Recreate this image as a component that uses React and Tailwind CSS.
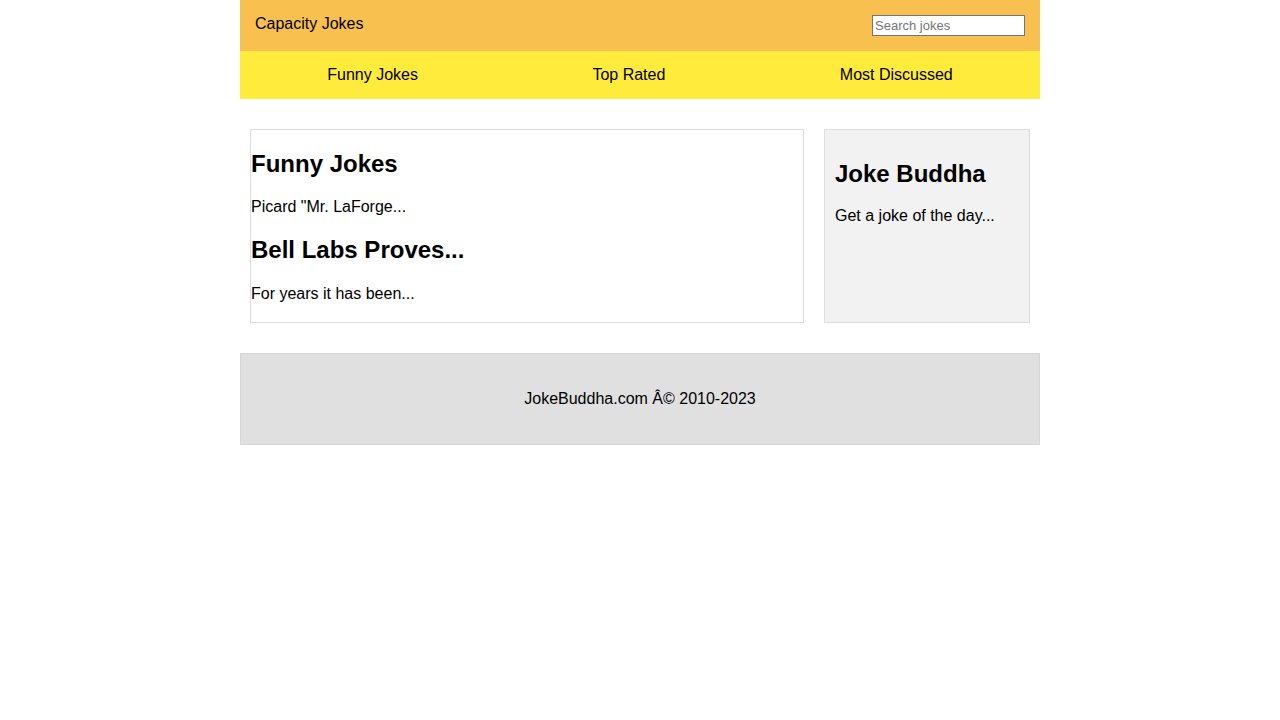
export default function App() {
  const navItems = ['Funny Jokes', 'Top Rated', 'Most Discussed']

  return (
    <div className="min-h-screen bg-white font-['Liberation_Sans',Arial,sans-serif] text-[16px] text-black">
      <div className="mx-auto w-[800px]">
        {/* header strip */}
        <header className="flex items-start justify-between bg-[#f8c14f] p-[15px] pb-[15px]">
          <div className="leading-[18px]">Capacity Jokes</div>
          <input
            type="text"
            placeholder="Search jokes"
            className="h-[21px] w-[153px] border border-[#767676] bg-white px-[2px] pb-[1px] text-[13px] leading-[14px] text-black placeholder:text-[#757575] outline-none"
          />
        </header>

        <nav className="flex h-[48px] items-center justify-around bg-[#ffeb3b]">
          {navItems.map((label) => (
            <a key={label} href="#" className="leading-[18px] text-black">
              {label}
            </a>
          ))}
        </nav>

        <div className="mt-[30px] flex gap-[20px] px-[10px]">
          <main className="h-[194px] w-[554px] border border-[#dddddd]">
            <h2 className="mt-[20px] text-[24px] font-bold leading-[27px]">Funny Jokes</h2>
            <p className="mt-[21px] leading-[18px]">Picard "Mr. LaForge...</p>
            <h2 className="mt-[20px] text-[24px] font-bold leading-[27px]">Bell Labs Proves...</h2>
            <p className="mt-[22px] leading-[18px]">For years it has been...</p>
          </main>

          <aside className="w-[206px] border border-[#dddddd] bg-[#f2f2f2] p-[10px]">
            <h2 className="mt-[20px] text-[24px] font-bold leading-[27px]">Joke Buddha</h2>
            <p className="mt-[20px] leading-[18px]">Get a joke of the day...</p>
          </aside>
        </div>

        <footer className="mt-[30px] border border-[#d6d6d6] bg-[#e0e0e0] px-[20px] py-[36px] text-center">
          <p className="leading-[18px]">JokeBuddha.com Â© 2010-2023</p>
        </footer>
      </div>
    </div>
  )
}
